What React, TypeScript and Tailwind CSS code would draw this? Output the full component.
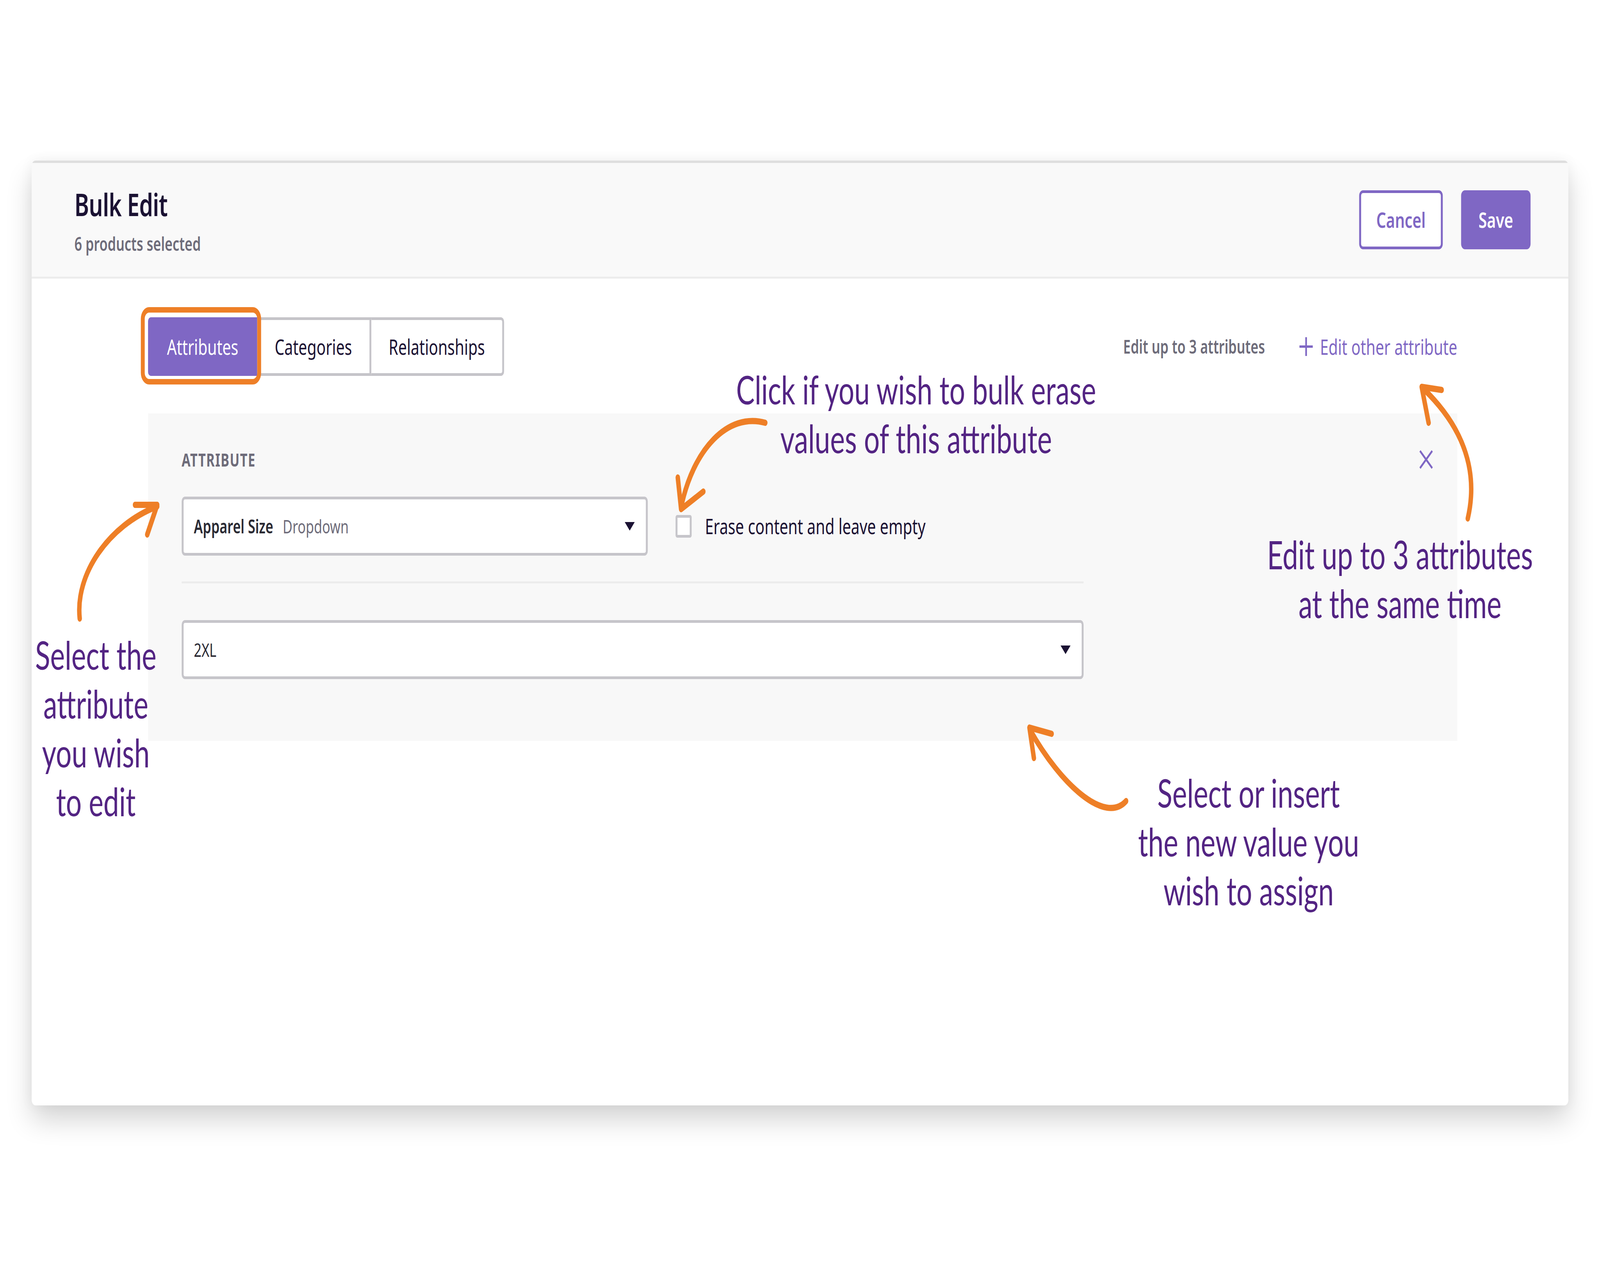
import React from "react";

// Caret used inside the two selects
function Caret() {
  return (
    <svg width="36" height="22" viewBox="0 0 36 22" className="shrink-0">
      <polygon points="0,0 36,0 18,22" fill="#1b1233" />
    </svg>
  );
}

function SelectBox({ width, children }: { width: string; children: React.ReactNode }) {
  return (
    <div
      className={`${width} h-[151px] bg-white border-[7px] border-[#c6c5ca] rounded-[12px] flex items-center justify-between pl-[37px] pr-[40px]`}
    >
      <div className="flex items-center gap-[34px] text-[48px]">{children}</div>
      <Caret />
    </div>
  );
}

function Arrows() {
  return (
    <svg
      className="absolute left-0 top-0 pointer-events-none"
      width="5760"
      height="3240"
      viewBox="0 0 5760 3240"
      fill="none"
      stroke="#ee7f27"
      strokeLinecap="round"
      strokeLinejoin="round"
      strokeWidth="16"
    >
      {/* erase checkbox */}
      <path d="M2755 1082 C2620 1055 2495 1150 2452 1298" />
      <path d="M2440 1222 L2452 1303 L2532 1258" />
      {/* attribute select */}
      <path d="M287 1583 C270 1470 390 1345 566 1296" />
      <path d="M486 1292 L566 1292 L530 1368" />
      {/* edit other attribute */}
      <path d="M5284 1327 C5325 1200 5262 1088 5120 992" />
      <path d="M5190 998 L5118 990 L5143 1082" />
      {/* value select */}
      <path d="M4054 2050 C3980 2110 3820 2010 3708 1868" />
      <path d="M3786 1878 L3706 1862 L3722 1940" />
    </svg>
  );
}

export default function App() {
  // the design is drawn on a 5760x3240 board, fitted to whatever window we get
  const sx = typeof window !== "undefined" ? window.innerWidth / 5760 : 1;
  const sy = typeof window !== "undefined" ? window.innerHeight / 3240 : 1;

  const note =
    "absolute font-['Lato',sans-serif] text-[100px] leading-[125px] text-[#532483] text-center whitespace-nowrap";

  return (
    <div className="w-screen h-screen overflow-hidden bg-white">
      <div
        className="relative w-[5760px] h-[3240px] bg-white origin-top-left font-['Noto_Sans',sans-serif] text-[#1b1233]"
        style={{ transform: `scale(${sx}, ${sy})` }}
      >
        <div className="pt-[411px] pl-[114px]">
          <div className="w-[5532px] h-[2418px] bg-white rounded-[14px] overflow-hidden shadow-[0_40px_80px_rgba(0,0,0,0.16),0_0_40px_rgba(0,0,0,0.05)] flex flex-col">
            {/* header */}
            <div className="h-[302px] shrink-0 bg-[#f9f9f9] border-t-[6px] border-t-[#dedede] border-b-[5px] border-b-[#ececec] flex items-center justify-between pl-[154px] pr-[136px]">
              <div className="flex flex-col">
                <h1 className="text-[80px] leading-[100px] font-semibold tracking-[-1px]">Bulk Edit</h1>
                <p className="text-[48px] leading-[60px] font-semibold text-[#6e6c7a] mt-[22px]">6 products selected</p>
              </div>
              <div className="flex items-center gap-[66px]">
                <button className="w-[301px] h-[151px] border-[7px] border-[#7f67c4] rounded-[14px] bg-white text-[#7f67c4] text-[55px] font-semibold">
                  Cancel
                </button>
                <button className="w-[250px] h-[151px] rounded-[14px] bg-[#7f67c4] text-white text-[55px] font-semibold">
                  Save
                </button>
              </div>
            </div>

            {/* body */}
            <div className="pt-[99px] pl-[419px] pr-[400px]">
              <div className="flex items-center justify-between h-[150px]">
                <div className="flex h-[150px]">
                  <div className="relative">
                    <button className="w-[393px] h-[150px] bg-[#7f67c4] text-white text-[55px] rounded-l-[10px]">
                      Attributes
                    </button>
                    <div className="absolute -left-[26px] -top-[26px] -right-[14px] -bottom-[22px] border-[14px] border-[#ee7f27] rounded-[30px]" />
                  </div>
                  <button className="w-[411px] h-[150px] bg-white border-y-[7px] border-r-[7px] border-[#c5c4c9] text-[55px]">
                    Categories
                  </button>
                  <button className="w-[478px] h-[150px] bg-white border-y-[7px] border-r-[7px] border-[#c5c4c9] rounded-r-[12px] text-[55px]">
                    Relationships
                  </button>
                </div>
                <div className="flex items-center">
                  <span className="text-[48px] font-semibold text-[#6e6c7a]">Edit up to 3 attributes</span>
                  <svg width="56" height="56" viewBox="0 0 56 56" className="ml-[120px]">
                    <path d="M28 4 V52 M4 28 H52" stroke="#7f67c4" strokeWidth="6" />
                  </svg>
                  <span className="ml-[22px] text-[55px] text-[#7f67c4]">Edit other attribute</span>
                </div>
              </div>

              {/* attribute panel */}
              <div className="mt-[96px] h-[838px] bg-[#f8f8f8] pt-[88px] pl-[121px] pr-[84px]">
                <div className="flex items-center justify-between h-[60px]">
                  <span className="text-[46px] font-bold tracking-[2px] text-[#6e6c7a]">ATTRIBUTE</span>
                  <svg width="56" height="56" viewBox="0 0 56 56">
                    <path d="M6 6 L50 50 M50 6 L6 50" stroke="#7f67c4" strokeWidth="6" />
                  </svg>
                </div>
                <div className="mt-[65px] flex items-center">
                  <SelectBox width="w-[1678px]">
                    <span className="font-semibold text-[#2a2a33]">Apparel Size</span>
                    <span className="text-[#6e6c7a]">Dropdown</span>
                  </SelectBox>
                  <div className="ml-[100px] w-[58px] h-[58px] border-[7px] border-[#c6c5ca] rounded-[6px] bg-white" />
                  <span className="ml-[48px] text-[55px]">Erase content and leave empty</span>
                </div>
                <div className="mt-[66px] w-[3247px] h-[5px] bg-[#ececec]" />
                <div className="mt-[94px]">
                  <SelectBox width="w-[3247px]">
                    <span className="text-[#2a2a33]">2XL</span>
                  </SelectBox>
                </div>
              </div>
            </div>
          </div>
        </div>

        {/* annotations */}
        <div className={`${note} left-[2498px] top-[934px] w-[1600px]`}>
          Click if you wish to bulk erase
          <br />
          values of this attribute
        </div>
        <div className={`${note} left-[45px] top-[1613px] w-[600px]`}>
          Select the
          <br />
          attribute
          <br />
          you wish
          <br />
          to edit
        </div>
        <div className={`${note} left-[4440px] top-[1356px] w-[1200px]`}>
          Edit up to 3 attributes
          <br />
          at the same time
        </div>
        <div className={`${note} left-[3895px] top-[1966px] w-[1200px]`}>
          Select or insert
          <br />
          the new value you
          <br />
          wish to assign
        </div>

        <Arrows />
      </div>
    </div>
  );
}
